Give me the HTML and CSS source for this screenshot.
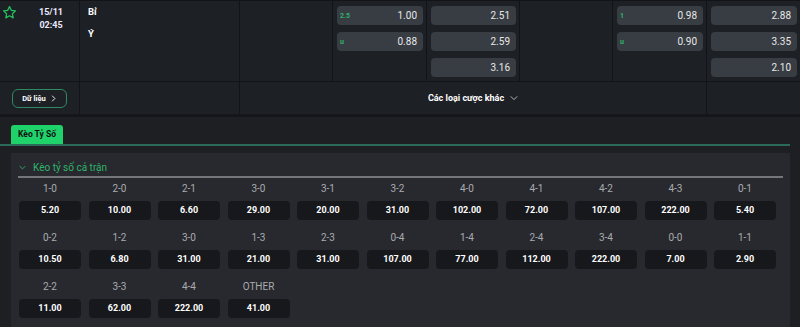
FILE: index.html
```html
<!DOCTYPE html>
<html lang="vi">
<head>
    <meta charset="UTF-8">
    <title>Kèo Tỷ Số</title>
    <link rel="stylesheet" href="styles.css">
</head>
<body>
<div class="match">
    <div class="match-row main">
        <div class="cell first">
            <svg class="star" viewBox="0 0 24 24" width="15" height="15"><path d="M12 2.5l2.9 6.1 6.6.8-4.9 4.6 1.3 6.6L12 17.3l-5.9 3.3 1.3-6.6-4.9-4.6 6.6-.8z" fill="none" stroke="#22c55e" stroke-width="2" stroke-linejoin="round"/></svg>
            <div class="time">15/11<br>02:45</div>
        </div>
        <div class="cell teams">
            <div>Bỉ</div>
            <div>Ý</div>
        </div>
        <div class="cell"></div>
        <div class="cell odds">
            <div class="odd"><span class="tag">2.5</span><span>1.00</span></div>
            <div class="odd"><span class="tag">u</span><span>0.88</span></div>
        </div>
        <div class="cell odds">
            <div class="odd"><span></span><span>2.51</span></div>
            <div class="odd"><span></span><span>2.59</span></div>
            <div class="odd"><span></span><span>3.16</span></div>
        </div>
        <div class="cell"></div>
        <div class="cell odds">
            <div class="odd"><span class="tag">1</span><span>0.98</span></div>
            <div class="odd"><span class="tag">u</span><span>0.90</span></div>
        </div>
        <div class="cell odds">
            <div class="odd"><span></span><span>2.88</span></div>
            <div class="odd"><span></span><span>3.35</span></div>
            <div class="odd"><span></span><span>2.10</span></div>
        </div>
    </div>
    <div class="match-row sub">
        <div class="cell first">
            <button class="data-btn">Dữ liệu
                <svg viewBox="0 0 10 10" width="7" height="7"><path d="M3 1l4 4-4 4" fill="none" stroke="#fff" stroke-width="1.3"/></svg>
            </button>
        </div>
        <div class="cell"></div>
        <div class="cell more">Các loại cược khác
            <svg viewBox="0 0 10 10" width="8" height="8"><path d="M1 3l4 4 4-4" fill="none" stroke="#ccc" stroke-width="1.1"/></svg>
        </div>
        <div class="cell"></div>
    </div>
</div>

<div class="tabs">
    <div class="tab">Kèo Tỷ Số</div>
</div>

<div class="panel">
    <div class="section-head">
        <svg viewBox="0 0 10 10" width="7" height="7"><path d="M1 3l4 4 4-4" fill="none" stroke="#2fb36a" stroke-width="1.3"/></svg>
        Kèo tỷ số cả trận
    </div>
    <div class="section-line"></div>
    <div class="score-grid" id="scoreGrid"></div>
</div>

<script>
    // Score odds list
    const scores = [
        ["1-0", "5.20"], ["2-0", "10.00"], ["2-1", "6.60"], ["3-0", "29.00"], ["3-1", "20.00"], ["3-2", "31.00"],
        ["4-0", "102.00"], ["4-1", "72.00"], ["4-2", "107.00"], ["4-3", "222.00"], ["0-1", "5.40"],
        ["0-2", "10.50"], ["1-2", "6.80"], ["3-0", "31.00"], ["1-3", "21.00"], ["2-3", "31.00"], ["0-4", "107.00"],
        ["1-4", "77.00"], ["2-4", "112.00"], ["3-4", "222.00"], ["0-0", "7.00"], ["1-1", "2.90"],
        ["2-2", "11.00"], ["3-3", "62.00"], ["4-4", "222.00"], ["OTHER", "41.00"]
    ];

    const grid = document.getElementById("scoreGrid");
    grid.innerHTML = scores.map(([label, odd]) =>
        `<div class="score"><div class="score-label">${label}</div><div class="score-odd">${odd}</div></div>`
    ).join("");
</script>
</body>
</html>
```

FILE: styles.css
```css
body {
    margin: 0;
    background-color: #1e1f23;
    font-family: Roboto, "Noto Sans", sans-serif;
    color: #fff;
    overflow: hidden;
}

/* Match table */
.match-row {
    display: grid;
    grid-template-columns: 80px 160px 93px 94px 93px 93px 94px 93px;
    background-color: #1d2025;
    border-top: 1px solid #121417;
}

.match-row.main { height: 80px; }
.match-row.sub {
    height: 32px;
    grid-template-columns: 80px 160px 467px 93px;
    border-bottom: 3px solid #141619;
}

.cell {
    border-right: 1px solid #121417;
    box-sizing: border-box;
}

.cell:last-child { border-right: none; }

.main .cell.first {
    display: flex;
    align-items: flex-start;
    padding: 4px 0 0 2px;
}

.star { flex-shrink: 0; }

.time {
    flex: 1;
    text-align: center;
    font-size: 9px;
    font-weight: bold;
    line-height: 13px;
    color: #ece9ff;
    padding: 1px 0 0 6px;
}

.teams {
    padding: 5px 0 0 8px;
    font-size: 9.5px;
    font-weight: bold;
    display: flex;
    flex-direction: column;
    gap: 11px;
}

.odds {
    display: flex;
    flex-direction: column;
    gap: 7px;
    padding: 5px 3px 0 4px;
}

.odd {
    height: 19px;
    background-color: #383c43;
    border-radius: 4px;
    display: flex;
    align-items: center;
    justify-content: space-between;
    padding: 0 6px 0 3px;
    font-size: 10px;
    color: #e8e8e8;
}

.tag {
    font-size: 7px;
    color: #2fb36a;
    font-weight: bold;
}

.sub .cell.first {
    display: flex;
    align-items: center;
    justify-content: center;
}

.data-btn {
    display: flex;
    align-items: center;
    gap: 4px;
    height: 19px;
    padding: 0 9px;
    background-color: #1d2025;
    border: 1.5px solid #2f8a62;
    border-radius: 6px;
    color: #fff;
    font-family: Roboto, sans-serif;
    font-size: 7.5px;
    font-weight: bold;
}

.more {
    display: flex;
    align-items: center;
    justify-content: center;
    gap: 6px;
    font-size: 9px;
    font-weight: bold;
}

/* Tabs */
.tabs {
    padding: 8px 10px 0 11px;
    border-bottom: 2px solid #2b6b58;
    margin: 0 10px 7px 0;
    display: flex;
}

.tab {
    background-color: #1fd36a;
    color: #111;
    font-size: 8.5px;
    font-weight: bold;
    height: 19px;
    line-height: 19px;
    padding: 0 7px;
    border-radius: 3px 3px 0 0;
}

/* Score panel */
.panel {
    margin: 0 10px 0 11px;
    background-color: #28292e;
    padding: 5px 0 8px;
    min-height: 170px;
}

.section-head {
    display: flex;
    align-items: center;
    gap: 7px;
    height: 18px;
    padding-left: 8px;
    color: #2fb36a;
    font-size: 10px;
}

.section-line {
    height: 2px;
    background-color: #74767e;
    margin: 0 7px 3px 7px;
}

.score-grid {
    display: grid;
    grid-template-columns: repeat(11, 1fr);
    column-gap: 7.5px;
    row-gap: 10px;
    margin: 0 14px 0 8px;
}

.score-label {
    text-align: center;
    font-size: 10px;
    line-height: 16px;
    color: #a9abb0;
    margin-bottom: 4px;
}

.score-odd {
    height: 19px;
    line-height: 19px;
    background-color: #17181b;
    border-radius: 4px;
    text-align: center;
    font-size: 9px;
    font-weight: bold;
}
```
